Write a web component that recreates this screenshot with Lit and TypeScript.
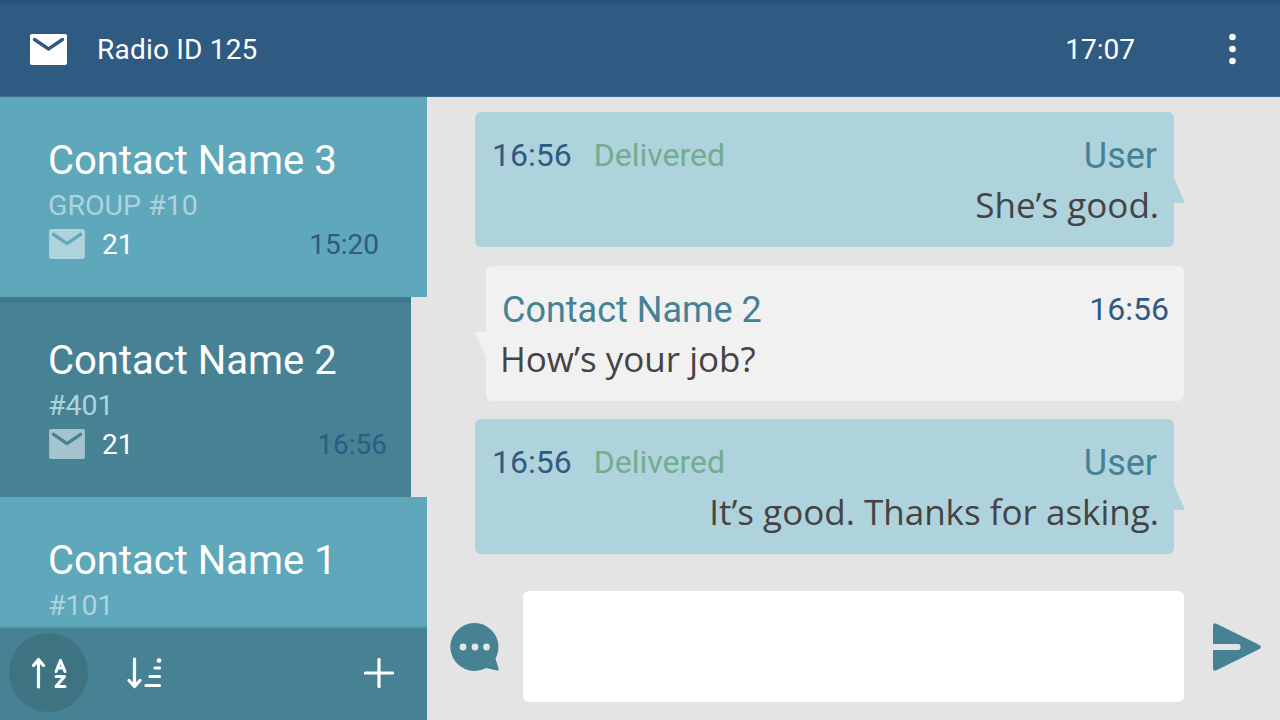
import { LitElement, html, css, svg } from "lit";
import { customElement } from "lit/decorators.js";

const mail = (bg: string, fg: string, cls: string) => html`<svg class=${cls} viewBox="0 0 37 31"><rect width="37" height="31" rx="2" fill=${bg}/><path d="M4.500 5.500 18.500 15 32.500 5.500" fill="none" stroke=${fg} stroke-width="3.400" stroke-linecap="round" stroke-linejoin="miter"/></svg>`;

@customElement("app-root")
export class AppRoot extends LitElement {
  static styles = css`
    :host { display: block; width: 1280px; height: 720px; overflow: hidden; font-family: Roboto, sans-serif; background: #e4e4e4; }
    .header { height: 97px; box-sizing: border-box; display: flex; align-items: center; background: linear-gradient(#2b4f72 0, #2f5a82 6px); color: #fff; font-size: 28px; padding: 0 0 0 30px; border-bottom: 1px solid #3f6e8e; }
    .hmail { width: 37px; height: 31px; margin-right: 30px; position: relative; top: 1px; }
    .htitle { flex: 1; position: relative; top: 1px; letter-spacing: 0.2px; }
    .clock { margin-right: 94px; position: relative; top: 1px; }
    .dots { width: 7px; height: 32px; margin-right: 44px; position: relative; top: 1px; }
    .body { display: flex; height: 623px; }
    .side { width: 427px; flex: none; display: flex; flex-direction: column; }
    .list { flex: 1; min-height: 0; overflow: hidden; }
    .item { box-sizing: border-box; height: 200px; background: #5fa7ba; color: #fff; padding: 41px 48px 0 49px; }
    .item.sel { width: 411px; background: #468294; border-top: 6px solid #3e7a8b; padding: 35px 24px 0 49px; }
    .name { font-size: 40px; line-height: 46px; margin-left: -1px; }
    .sub { font-size: 28.500px; line-height: 32px; margin-top: 6px; margin-left: -1px; color: #afd3dd; height: 32px; }
    .meta { display: flex; align-items: center; font-size: 28px; height: 32px; margin-top: 6px; }
    .mmail { width: 36px; height: 30px; margin-right: 17px; }
    .count { flex: 1; }
    .time { color: #2f5a82; }
    .bar { height: 94px; flex: none; box-sizing: border-box; background: #468294; border-top: 2px solid #589cb0; display: flex; align-items: center; padding: 0 33px 3px 9px; }
    .round { width: 79px; height: 79px; border-radius: 50%; background: #3e7382; display: flex; align-items: center; justify-content: center; }
    .bar svg { display: block; }
    .sort2 { margin-left: 38px; }
    .plus { margin-left: auto; }
    .chat { flex: 1; padding: 15px 96px 0 48px; box-sizing: border-box; display: flex; flex-direction: column; position: relative; }
    .bubble { position: relative; height: 135px; box-sizing: border-box; border-radius: 6px; }
    .out { background: #afd3dd; margin-right: 10px; margin-bottom: 19px; width: 699px; padding: 20px 15px 0 17px; }
    .in { background: #f1f1f1; margin-left: 11px; margin-bottom: 18px; width: 698px; padding: 20px 15px 0 14px; }
    .row { display: flex; align-items: baseline; font-size: 32px; line-height: 44px; }
    .stamp { color: #2f5a82; }
    .status { color: #72ad8e; margin-left: 22px; flex: 1; }
    .user { color: #468294; font-size: 36px; position: relative; top: 2px; margin-right: 2px; }
    .from { color: #468294; flex: 1; margin-left: 2px; font-size: 36px; position: relative; top: 2px; }
    .msg { font-family: "Open Sans", "Noto Sans", sans-serif; color: #444; font-size: 35px; line-height: 50px; margin-top: 3px; }
    .in .msg { margin-top: 3px; }
    .out .msg { text-align: right; }
    .tail { position: absolute; width: 11px; height: 25px; }
    .out .tail { left: 100%; top: 66px; }
    .in .tail { right: 100%; top: 66px; }
    .compose { position: absolute; left: 0; right: 0; top: 494px; height: 111px; display: block; }
    .field { position: absolute; left: 96px; top: 0; width: 661px; height: 111px; background: #fff; border-radius: 6px; }
    .ico-chat { position: absolute; left: 23px; top: 31px; width: 50px; height: 50px; }
    .ico-send { position: absolute; left: 785px; top: 31px; width: 50px; height: 50px; }
  `;

  private item(name: string, sub: string, time: string, sel = false, meta = true) {
    return html`<div class="item ${sel ? "sel" : ""}">
      <div class="name">${name}</div>
      <div class="sub">${sub}</div>
      ${meta ? html`<div class="meta">${mail(sel ? "#a3c3cd" : "#afd3dd", sel ? "#468294" : "#5fa7ba", "mmail")}<span class="count">21</span><span class="time">${time}</span></div>` : ""}
    </div>`;
  }

  private tail(left: boolean, fill: string) {
    return html`<svg class="tail" viewBox="0 0 11 25"><path d=${left ? "M0 0H11V25Z" : "M0 0 11 25H0Z"} fill=${fill}/></svg>`;
  }

  private out(text: string) {
    return html`<div class="bubble out">
      ${this.tail(false, "#afd3dd")}
      <div class="row"><span class="stamp">16:56</span><span class="status">Delivered</span><span class="user">User</span></div>
      <div class="msg">${text}</div>
    </div>`;
  }

  render() {
    return html`
      <div class="header">
        ${mail("#fff", "#2f5a82", "hmail")}
        <span class="htitle">Radio ID 125</span>
        <span class="clock">17:07</span>
        <svg class="dots" viewBox="0 0 7 32"><circle cx="3.500" cy="4" r="3.300" fill="#fff"/><circle cx="3.500" cy="16" r="3.300" fill="#fff"/><circle cx="3.500" cy="28" r="3.300" fill="#fff"/></svg>
      </div>
      <div class="body">
        <div class="side">
          <div class="list">
            ${this.item("Contact Name 3", "GROUP #10", "15:20")}
            ${this.item("Contact Name 2", "#401", "16:56", true)}
            ${this.item("Contact Name 1", "#101", "", false, false)}
          </div>
          <div class="bar">
            <div class="round">
              <svg width="40" height="32" viewBox="0 0 40 32" fill="none" stroke="#fff" stroke-width="3.200" stroke-linecap="round" stroke-linejoin="round">
                ${svg`<path d="M9.500 30V2.500M4.500 8.500 9.500 2.500 14.500 8.500"/><path stroke-width="3" d="M27 14.500 31.500 3.500 36 14.500M28.500 11H34.500M27 19.500H35.500L27 29.500H36"/>`}
              </svg>
            </div>
            <svg class="sort2" width="38" height="32" viewBox="0 0 38 32" fill="none" stroke="#fff" stroke-width="3.200" stroke-linecap="round" stroke-linejoin="round">
              ${svg`<path d="M8.500 2V29.500M3 23.500 8.500 29.500 14 23.500"/><path d="M20 28.500H33.500M24 19.500H33.500M29 11H33.500"/><path stroke-width="4.600" d="M33 3.500H33.100"/>`}
            </svg>
            <svg class="plus" width="30" height="30" viewBox="0 0 30 30" fill="none" stroke="#fff" stroke-width="3.200" stroke-linecap="round">
              ${svg`<path d="M15 1.500V28.500M1.500 15H28.500"/>`}
            </svg>
          </div>
        </div>
        <div class="chat">
          ${this.out("She’s good.")}
          <div class="bubble in">
            ${this.tail(true, "#f1f1f1")}
            <div class="row"><span class="from">Contact Name 2</span><span class="stamp">16:56</span></div>
            <div class="msg">How’s your job?</div>
          </div>
          ${this.out("It’s good. Thanks for asking.")}
          <div class="compose">
            <svg class="ico-chat" viewBox="0 0 50 50"><path fill="#468294" d="M24.500 1A24 24 0 1 0 36 46L47 48.500Q49.500 48.500 48.500 46L45.500 36.500A24 24 0 0 0 24.500 1Z"/><circle cx="13" cy="25" r="3.400" fill="#e4e4e4"/><circle cx="25" cy="25" r="3.400" fill="#e4e4e4"/><circle cx="36.500" cy="25" r="3.400" fill="#e4e4e4"/></svg>
            <svg class="ico-send" viewBox="0 0 50 50"><path fill="#468294" d="M1 4Q1 .500 4 1.500L47.500 23Q50 25 47.500 27L4 48.500Q1 49.500 1 46V28H26Q28.500 28 28.500 25 28.500 22 26 22H1Z"/></svg>
            <div class="field"></div>
          </div>
        </div>
      </div>
    `;
  }
}
